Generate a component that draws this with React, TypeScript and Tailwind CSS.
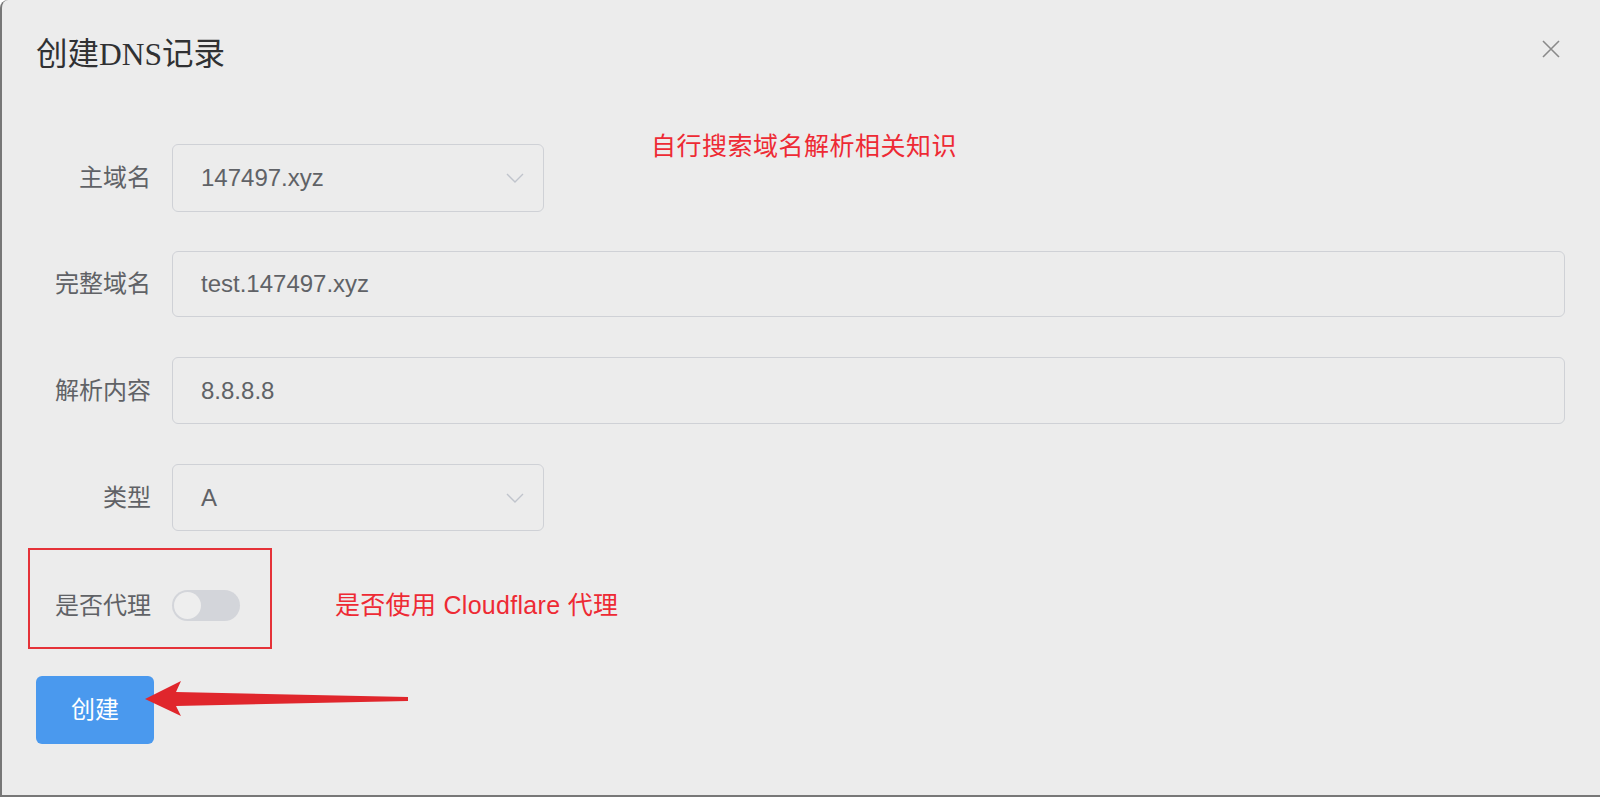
import { useState } from "react"

const sans = { fontFamily: '"Liberation Sans", "Noto Sans CJK SC", sans-serif' }

function Chevron() {
    return (
        <svg width="18" height="10" viewBox="0 0 18 10" fill="none">
            <path d="M1 1 L9 9 L17 1" stroke="#c0c4cc" strokeWidth="1.4" />
        </svg>
    )
}

function SelectBox({ value }: { value: string }) {
    return (
        <div className="ml-[21px] flex h-full w-[372px] items-center justify-between rounded-[6px] border border-[#cfd1d6] pl-[28px] pr-[19px] text-[24px] text-[#606266]">
            <span>{value}</span>
            <Chevron />
        </div>
    )
}

function InputBox({ value }: { value: string }) {
    return (
        <div className="ml-[21px] flex h-full flex-1 items-center rounded-[6px] border border-[#cfd1d6] pl-[28px] text-[24px] text-[#606266]">
            {value}
        </div>
    )
}

function Label({ text }: { text: string }) {
    return <span className="w-[115px] shrink-0 text-right text-[24px] text-[#606266]">{text}</span>
}

export default function App() {
    const [proxy, setProxy] = useState(false)

    return (
        <div style={sans} className="relative h-[797px] w-[1600px] overflow-hidden rounded-tl-lg border-b-2 border-l-2 border-[#777777] bg-[#ececec]">
            <div className="flex flex-col pl-[34px] pr-[35px]">
                <div className="flex items-start justify-between pt-[36px]">
                    <span
                        className="text-[31.5px] leading-[38px] text-[#303133]"
                        style={{ fontFamily: '"Liberation Serif", "Noto Sans CJK SC", serif' }}
                    >
                        创建DNS记录
                    </span>
                    <svg className="mr-[5px] mt-[4px]" width="18" height="18" viewBox="0 0 18 18">
                        <path d="M1 1 L17 17 M17 1 L1 17" stroke="#8a8a8a" strokeWidth="1.6" />
                    </svg>
                </div>

                <div className="mt-[70px] flex h-[68px] items-center">
                    <Label text="主域名" />
                    <SelectBox value="147497.xyz" />
                    <span className="-mt-[62px] ml-[107px] text-[25px] tracking-[0.5px] text-[#ee2a34]">自行搜索域名解析相关知识</span>
                </div>

                <div className="mt-[39px] flex h-[66px] items-center">
                    <Label text="完整域名" />
                    <InputBox value="test.147497.xyz" />
                </div>

                <div className="mt-[40px] flex h-[67px] items-center">
                    <Label text="解析内容" />
                    <InputBox value="8.8.8.8" />
                </div>

                <div className="mt-[40px] flex h-[67px] items-center">
                    <Label text="类型" />
                    <SelectBox value="A" />
                </div>

                <div className="mt-[17px] flex items-center">
                    <div className="-ml-[8px] flex h-[101px] w-[244px] items-center border-2 border-[#e53238] pt-[14px]">
                        <span className="w-[121px] shrink-0 text-right text-[24px] text-[#606266]">是否代理</span>
                        <button
                            onClick={() => setProxy(!proxy)}
                            className={`ml-[21px] flex h-[31px] w-[68px] items-center rounded-full p-[2px] ${proxy ? "justify-end bg-[#409eff]" : "justify-start bg-[#d3d5da]"}`}
                        >
                            <span className="h-[27px] w-[27px] rounded-full bg-[#eeeeee]" />
                        </button>
                    </div>
                    <span className="ml-[63px] mt-[14px] text-[25px] tracking-[0.3px] text-[#ee2a34]">是否使用 Cloudflare 代理</span>
                </div>

                <div className="mt-[27px]">
                    <button className="h-[68px] w-[118px] rounded-[6px] bg-[#4a99ee] text-[24px] text-white">创建</button>
                </div>
            </div>

            <svg className="absolute left-0 top-0" width="1600" height="797" viewBox="0 0 1600 797">
                <path d="M143 699 L179 681 L174 692 L406 697 L406 701 L174 706 L179 716 Z" fill="#e0262c" />
            </svg>
        </div>
    )
}
